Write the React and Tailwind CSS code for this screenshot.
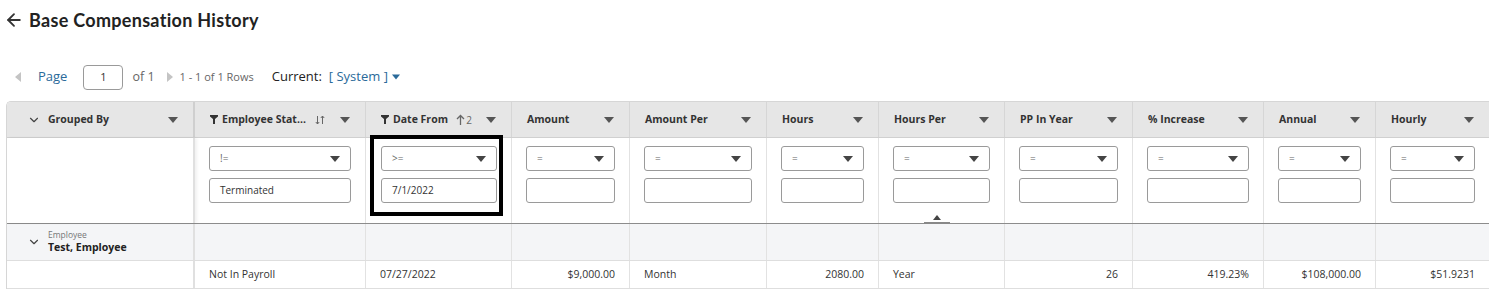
import { ArrowLeft, ChevronDown } from 'lucide-react'

const font = { fontFamily: '"Open Sans", "Noto Sans", sans-serif' }

const columns = [
  { key: 'status', label: 'Employee Stat...', filter: true, sort: 'both', op: '!=', value: 'Terminated', data: 'Not In Payroll' },
  { key: 'date', label: 'Date From', filter: true, sort: 'up2', op: '>=', value: '7/1/2022', data: '07/27/2022', boxed: true },
  { key: 'amount', label: 'Amount', op: '=', data: '$9,000.00', right: true },
  { key: 'amountPer', label: 'Amount Per', op: '=', data: 'Month' },
  { key: 'hours', label: 'Hours', op: '=', data: '2080.00', right: true },
  { key: 'hoursPer', label: 'Hours Per', op: '=', data: 'Year', toggle: true },
  { key: 'pp', label: 'PP In Year', op: '=', data: '26', right: true },
  { key: 'increase', label: '% Increase', op: '=', data: '419.23%', right: true },
  { key: 'annual', label: 'Annual', op: '=', data: '$108,000.00', right: true },
  { key: 'hourly', label: 'Hourly', op: '=', data: '$51.9231', right: true },
]

const grid = 'grid grid-cols-[188px_171px_146px_118px_137px_112px_126px_128px_131px_112px_114px]'

function Caret({ className = '' }) {
  return (
    <svg width="10" height="6" viewBox="0 0 10 6" className={className}>
      <path d="M0 0 L10 0 L5 6 Z" fill="currentColor" />
    </svg>
  )
}

function Funnel() {
  return (
    <svg width="8" height="9" viewBox="0 0 8 9" className="mr-[4px] text-[#333]">
      <path d="M0 0 H8 V1.5 L5 4 V9 H3 V4 L0 1.5 Z" fill="currentColor" />
    </svg>
  )
}

function SortIcon({ type }) {
  if (type === 'both') {
    return (
      <svg width="10" height="10" viewBox="0 0 10 10" className="ml-auto mr-[15px] text-[#666]">
        <path d="M2.5 1 V9 M0.8 7 L2.5 9 L4.2 7 M7.5 9 V1 M5.8 3 L7.5 1 L9.2 3" stroke="currentColor" strokeWidth="1" fill="none" />
      </svg>
    )
  }
  return (
    <span className="ml-auto mr-[14px] flex items-center text-[#666]">
      <svg width="9" height="11" viewBox="0 0 9 11">
        <path d="M4.5 11 V1.5 M1 5 L4.5 1.5 L8 5" stroke="currentColor" strokeWidth="1.3" fill="none" />
      </svg>
      <span className="ml-[1px] text-[10px] leading-none">2</span>
    </span>
  )
}

function HeaderCell({ col }) {
  return (
    <div className="flex h-[35px] items-center border-r border-[#d6d6d6] pl-[15px] pr-[15px]">
      {col.filter && <Funnel />}
      <span className="text-[10.5px] font-bold text-[#333]">{col.label}</span>
      {col.sort ? <SortIcon type={col.sort} /> : <span className="ml-auto" />}
      <Caret className="text-[#555]" />
    </div>
  )
}

function FilterCell({ col }) {
  const inner = (
    <div className="flex flex-col gap-[7px]">
      <div className="flex h-[25px] items-center rounded-[3px] border border-[#9a9a9a] bg-white pl-[10px] pr-[10px]">
        <span className="text-[10px] text-[#666]">{col.op}</span>
        <Caret className="ml-auto text-[#444]" />
      </div>
      <div className="flex h-[25px] items-center rounded-[3px] border border-[#9a9a9a] bg-white pl-[10px]">
        <span className="text-[10px] text-[#333]">{col.value || ''}</span>
      </div>
    </div>
  )
  return (
    <div className="relative border-r border-[#e2e2e2] px-[14px] pt-[8px]">
      {col.boxed ? (
        <div className="-ml-[10px] -mr-[6px] -mt-[11px] border-[4px] border-black pb-[9px] pl-[7px] pr-[2px] pt-[7px]">{inner}</div>
      ) : (
        inner
      )}
      {col.toggle && (
        <div className="absolute bottom-[-1px] left-[45px] flex h-[10px] w-[26px] items-start justify-center border-b-2 border-[#888]">
          <svg width="8" height="5" viewBox="0 0 8 5" className="mt-[1px] text-[#444]">
            <path d="M0 5 L8 5 L4 0 Z" fill="currentColor" />
          </svg>
        </div>
      )}
    </div>
  )
}

export default function App() {
  return (
    <div className="h-[307px] w-[1489px] overflow-hidden bg-white" style={font}>
      <div className="flex h-[39px] items-center pl-[4px] pt-[1px]">
        <ArrowLeft size={20} strokeWidth={2.2} className="text-[#333]" />
        <h1 className="ml-[5px] text-[18px] font-bold tracking-[0.3px] text-[#222]" style={{ fontFamily: 'Lato, "Open Sans", sans-serif' }}>
          Base Compensation History
        </h1>
      </div>

      <div className="flex h-[62px] items-center pl-[15px] pt-[14px]">
        <svg width="6" height="10" viewBox="0 0 6 10" className="text-[#c4c4c4]">
          <path d="M6 0 L6 10 L0 5 Z" fill="currentColor" />
        </svg>
        <span className="ml-[17px] text-[13px] text-[#2a6a9a]">Page</span>
        <div className="ml-[16px] flex h-[25px] w-[40px] items-center justify-center rounded-[4px] border border-[#9a9a9a] text-[11px] text-[#333]">
          1
        </div>
        <span className="ml-[9px] text-[12.5px] text-[#666]">of 1</span>
        <svg width="6" height="10" viewBox="0 0 6 10" className="ml-[12px] text-[#c4c4c4]">
          <path d="M0 0 L0 10 L6 5 Z" fill="currentColor" />
        </svg>
        <span className="ml-[7px] text-[11px] text-[#666]">1 - 1 of 1 Rows</span>
        <span className="ml-[18px] text-[13px] text-[#222]">Current:</span>
        <span className="ml-[7px] text-[13px] text-[#2a6a9a]">[ System ]</span>
        <Caret className="ml-[4px] w-[8px] text-[#2a6a9a]" />
      </div>

      <div className="ml-[6px] overflow-hidden rounded-tl-[5px] border-l border-t border-[#d6d6d6] text-[10.5px] text-[#333]">
        <div className={`${grid} border-b border-[#d0d0d0] bg-[#e6e6e6]`}>
          <div className="flex h-[35px] items-center border-r-2 border-[#cfcfcf] pl-[20px] pr-[15px]">
            <ChevronDown size={14} strokeWidth={2} className="text-[#444]" />
            <span className="ml-[7px] text-[10.5px] font-bold">Grouped By</span>
            <Caret className="ml-auto text-[#555]" />
          </div>
          {columns.map(col => (
            <HeaderCell key={col.key} col={col} />
          ))}
        </div>

        <div className={`${grid} h-[86px] border-b border-[#8c8c8c]`}>
          <div className="border-r-2 border-[#e0e0e0] shadow-[2px_0_3px_rgba(0,0,0,0.06)]" />
          {columns.map(col => (
            <FilterCell key={col.key} col={col} />
          ))}
        </div>

        <div className={`${grid} h-[37px] border-b border-[#dedede] bg-[#f4f5f7]`}>
          <div className="flex items-center border-r-2 border-[#e0e0e0] pl-[20px]">
            <ChevronDown size={14} strokeWidth={2} className="text-[#444]" />
            <div className="ml-[7px] flex flex-col leading-tight">
              <span className="text-[8.5px] text-[#777]">Employee</span>
              <span className="text-[10.5px] font-bold text-[#222]">Test, Employee</span>
            </div>
          </div>
          {columns.map(col => (
            <div key={col.key} className="border-r border-[#e2e2e2]" />
          ))}
        </div>

        <div className={`${grid} h-[28px] border-b border-[#dedede]`}>
          <div className="border-r-2 border-[#e0e0e0]" />
          {columns.map(col => (
            <div
              key={col.key}
              className={`flex items-center border-r border-[#e2e2e2] px-[14px] ${col.right ? 'justify-end' : ''}`}
            >
              {col.data}
            </div>
          ))}
        </div>
      </div>
    </div>
  )
}
